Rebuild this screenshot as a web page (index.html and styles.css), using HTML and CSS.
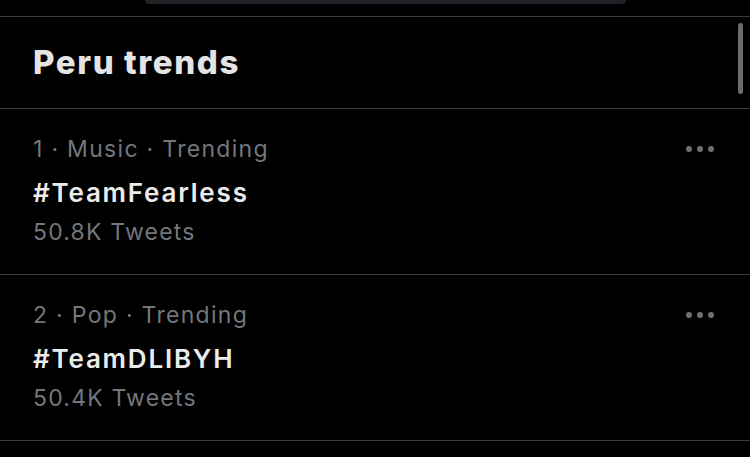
FILE: index.html
```html
<!DOCTYPE html>
<html lang="en">
<head>
<meta charset="utf-8">
<title>Peru trends</title>
<link rel="stylesheet" href="styles.css">
</head>
<body>
<div class="page">
  <div class="search-stub"></div>
  <section class="panel">
    <header class="panel-header">
      <h2 class="panel-title">Peru trends</h2>
    </header>
    <ul class="trends">
      <li class="trend">
        <div class="trend-body">
          <div class="trend-meta">1 · Music · Trending</div>
          <div class="trend-tag">#TeamFearless</div>
          <div class="trend-count">50.8K Tweets</div>
        </div>
        <svg class="more" width="28" height="6" viewBox="0 0 28 6" aria-hidden="true">
          <circle cx="3" cy="3" r="3"/><circle cx="14" cy="3" r="3"/><circle cx="25" cy="3" r="3"/>
        </svg>
      </li>
      <li class="trend">
        <div class="trend-body">
          <div class="trend-meta">2 · Pop · Trending</div>
          <div class="trend-tag">#TeamDLIBYH</div>
          <div class="trend-count">50.4K Tweets</div>
        </div>
        <svg class="more" width="28" height="6" viewBox="0 0 28 6" aria-hidden="true">
          <circle cx="3" cy="3" r="3"/><circle cx="14" cy="3" r="3"/><circle cx="25" cy="3" r="3"/>
        </svg>
      </li>
    </ul>
    <div class="scrollbar"></div>
  </section>
</div>
</body>
</html>
```

FILE: styles.css
```css
html, body {
  margin: 0;
  padding: 0;
  background: #000;
}
body {
  font-family: Inter, "Noto Sans", "Liberation Sans", sans-serif;
  color: #e7e9ea;
  width: 750px;
  height: 457px;
  overflow: hidden;
}
.page {
  display: flex;
  flex-direction: column;
}
.search-stub {
  margin-left: 145px;
  width: 481px;
  height: 4px;
  background: #1f2226;
  border-radius: 0 0 14px 14px;
}
.panel {
  position: relative;
  margin-top: 12px;
  border-top: 1px solid #3a3b3d;
}
.panel-header {
  padding: 25px 33px 26px;
  border-bottom: 1px solid #3a3b3d;
}
.panel-title {
  margin: 0;
  font-size: 33px;
  line-height: 40px;
  font-weight: 800;
  letter-spacing: 1.6px;
  color: #e4e4e4;
}
.trends {
  list-style: none;
  margin: 0;
  padding: 0;
}
.trend {
  display: flex;
  justify-content: space-between;
  align-items: flex-start;
  padding: 25px 36px 27px 33px;
  border-bottom: 1px solid #3a3b3d;
}
.trend-body {
  display: flex;
  flex-direction: column;
}
.trend-meta,
.trend-count {
  font-size: 23px;
  line-height: 30px;
  color: #73777c;
}
.trend-meta {
  letter-spacing: 1.3px;
}
.trend-tag {
  margin-top: 11px;
  font-size: 26px;
  line-height: 36px;
  font-weight: 600;
  letter-spacing: 1.8px;
  color: #ececec;
}
.trend-count {
  margin-top: 6px;
  letter-spacing: 1.2px;
}
.more {
  margin-top: 12px;
  fill: #6f7072;
}
.scrollbar {
  position: absolute;
  top: 6px;
  right: 7px;
  width: 5px;
  height: 71px;
  border-radius: 3px;
  background: #6c6c6c;
}
```
